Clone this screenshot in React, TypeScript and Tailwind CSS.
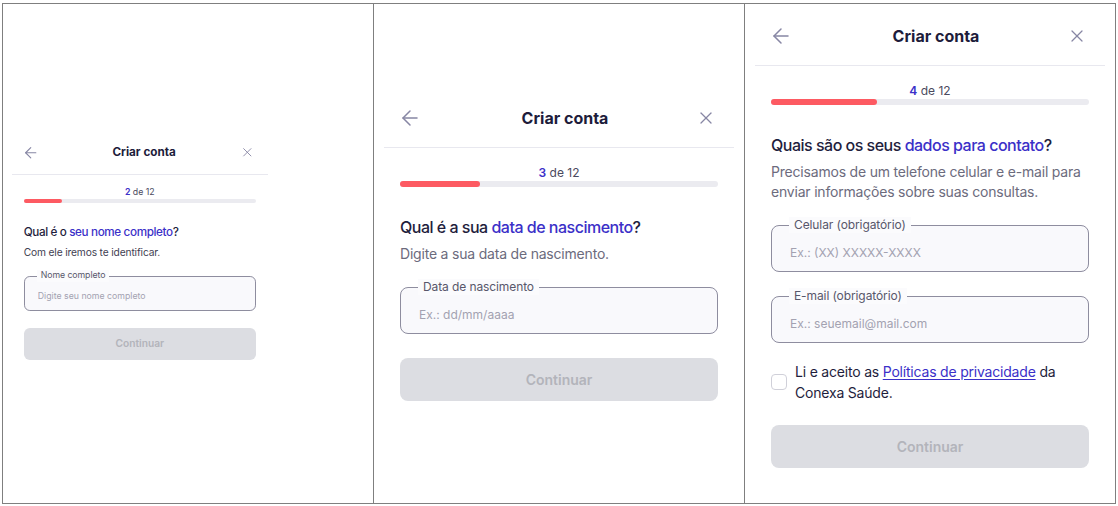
import { ArrowLeft, X } from "lucide-react";
import clsx from "clsx";

type Field = { label: string; placeholder: string };

type StepData = {
  step: number;
  lead: string;
  highlight: string;
  description: string;
  fields: Field[];
  terms?: boolean;
};

const TOTAL_STEPS = 12;

const steps: StepData[] = [
  {
    step: 2,
    lead: "Qual é o",
    highlight: "seu nome completo",
    description: "Com ele iremos te identificar.",
    fields: [{ label: "Nome completo", placeholder: "Digite seu nome completo" }],
  },
  {
    step: 3,
    lead: "Qual é a sua",
    highlight: "data de nascimento",
    description: "Digite a sua data de nascimento.",
    fields: [{ label: "Data de nascimento", placeholder: "Ex.: dd/mm/aaaa" }],
  },
  {
    step: 4,
    lead: "Quais são os seus",
    highlight: "dados para contato",
    description: "Precisamos de um telefone celular e e-mail para enviar informações sobre suas consultas.",
    fields: [
      { label: "Celular (obrigatório)", placeholder: "Ex.: (XX) XXXXX-XXXX" },
      { label: "E-mail (obrigatório)", placeholder: "Ex.: seuemail@mail.com" },
    ],
    terms: true,
  },
];

function OutlinedInput({ field }: { field: Field }) {
  return (
    <fieldset className="rounded-lg border-[1.5px] border-[#8e8d9f] bg-[#f9f9fc]">
      <legend className="ml-[17px] bg-[#fbfbfd] px-[5px] text-[12px] leading-4 tracking-[-0.1px] text-[#58576b]">
        {field.label}
      </legend>
      <input
        type="text"
        placeholder={field.placeholder}
        className="block h-[38px] w-full bg-transparent pl-[18px] text-[12px] text-[#1f1e3d] outline-none placeholder:text-[#a3a2b1]"
      />
    </fieldset>
  );
}

function SignupModal({ data, descClass }: { data: StepData; descClass?: string }) {
  const pct = (data.step / TOTAL_STEPS) * 100;

  return (
    <div className="w-[350px] bg-white">
      <header className="flex h-[60px] items-center border-b border-[#e8e8ef] pl-[14px] pr-[18px]">
        <ArrowLeft size={24} strokeWidth={1.5} className="shrink-0 text-[#8786a4]" />
        <h2 className="flex-1 pl-3 text-center text-[16px] font-bold text-[#1d1c3b]">Criar conta</h2>
        <X size={20} strokeWidth={1.5} className="shrink-0 text-[#8786a4]" />
      </header>

      <div className="px-4 pb-4">
        <p className="mt-[17px] text-center text-[12px] leading-4 text-[#4b4a5e]">
          <span className="font-semibold text-[#3b30c8]">{data.step}</span> de {TOTAL_STEPS}
        </p>
        <div className="h-[6px] rounded-full bg-[#ebebf0]">
          <div className="h-full rounded-full bg-[#fd5a62]" style={{ width: `${pct}%` }} />
        </div>

        <h3 className="mt-7 text-[16px] font-medium leading-6 tracking-[-0.5px] text-[#1f1e3d]">
          {data.lead} <span className="text-[#3b30c8]">{data.highlight}</span>?
        </h3>
        <p className={clsx("mt-[5px] text-[14px] leading-5 tracking-[-0.2px]", descClass ?? "text-[#6c6b7d]")}>
          {data.description}
        </p>

        <div className="mt-[15px] flex flex-col gap-4">
          {data.fields.map((field) => (
            <OutlinedInput key={field.label} field={field} />
          ))}
        </div>

        {data.terms && (
          <label className="mt-[18px] flex items-center gap-2">
            <span className="h-4 w-4 shrink-0 rounded-[4px] border border-[#d0d0d9] bg-white" />
            <span className="text-[14px] leading-[21px] tracking-[-0.2px] text-[#1f1e3d]">
              Li e aceito as{" "}
              <a href="#" className="text-[#3b30c8] underline underline-offset-2">
                Políticas de privacidade
              </a>{" "}
              da Conexa Saúde.
            </span>
          </label>
        )}

        <button
          type="button"
          disabled
          className={clsx(
            "h-[43px] w-full rounded-lg bg-[#dcdde2] text-[14px] font-semibold text-[#b3b4bb]",
            data.terms ? "mt-[22px]" : "mt-6",
          )}
        >
          Continuar
        </button>
      </div>
    </div>
  );
}

export default function App() {
  return (
    <div className="h-[506px] w-[1118px] bg-white pl-[2px] pt-[3px] font-['Inter','Noto_Sans',sans-serif]">
      <div className="flex h-[501px] w-[1114px] border border-[#7f7f7f]">
        <section className="w-[370px] shrink-0 pl-[9px] pt-[127px]">
          <div className="[zoom:0.73]">
            <SignupModal data={steps[0]} descClass="text-[#3f3e52]" />
          </div>
        </section>
        <section className="w-[371px] shrink-0 border-l border-[#7f7f7f] px-[10px] pt-[84px]">
          <SignupModal data={steps[1]} />
        </section>
        <section className="w-[371px] shrink-0 border-l border-[#7f7f7f] px-[10px] pt-[2px]">
          <SignupModal data={steps[2]} />
        </section>
      </div>
    </div>
  );
}
